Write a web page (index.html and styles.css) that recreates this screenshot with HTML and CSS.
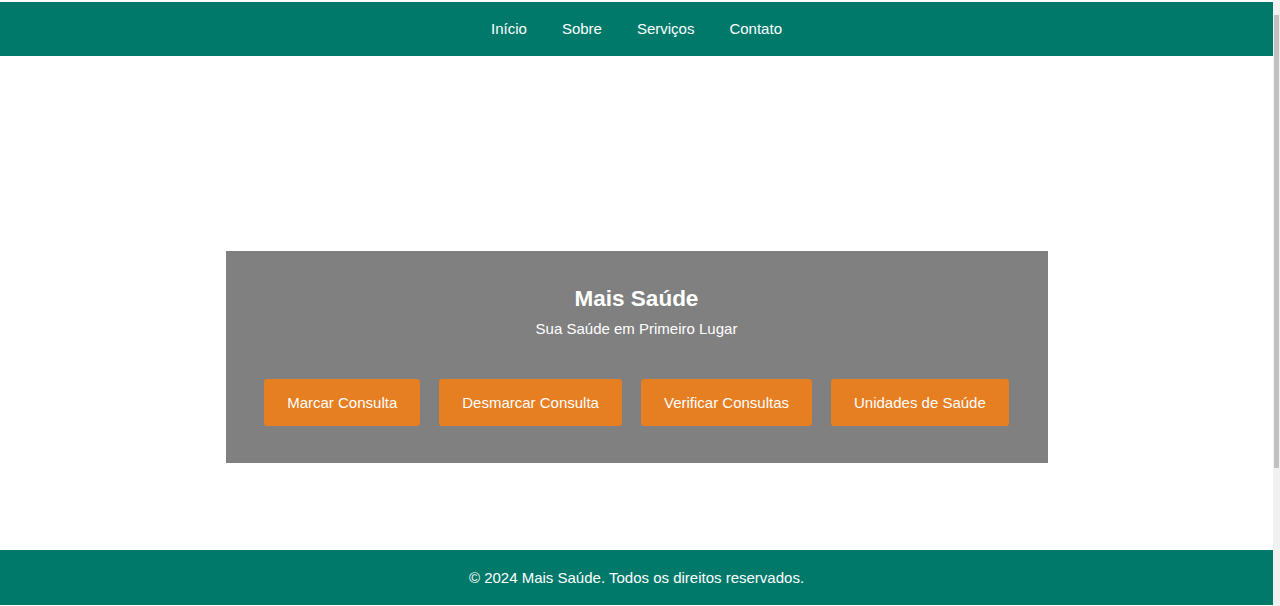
FILE: index.html
```html
<!DOCTYPE html>
<html lang="pt-BR">
<head>
<meta charset="utf-8">
<title>Mais Saúde</title>
<link rel="stylesheet" href="styles.css">
</head>
<body>
<header class="topbar">
  <nav class="nav">
    <a class="nav-link" href="#">Início</a>
    <a class="nav-link" href="#">Sobre</a>
    <a class="nav-link" href="#">Serviços</a>
    <a class="nav-link" href="#">Contato</a>
  </nav>
</header>
<main class="main">
  <section class="hero">
    <h1 class="hero-title">Mais Saúde</h1>
    <p class="hero-sub">Sua Saúde em Primeiro Lugar</p>
    <div class="actions">
      <button class="btn">Marcar Consulta</button>
      <button class="btn">Desmarcar Consulta</button>
      <button class="btn">Verificar Consultas</button>
      <button class="btn">Unidades de Saúde</button>
    </div>
  </section>
</main>
<footer class="footer">
  <p class="footer-text">© 2024 Mais Saúde. Todos os direitos reservados.</p>
</footer>
<div class="scrollbar" aria-hidden="true"><div class="scrollbar-thumb"></div></div>
</body>
</html>
```
FILE: styles.css
```css
html {
  overflow: hidden;
}
body {
  margin: 0;
  padding: 2px 7px 0 0;
  font-family: "Liberation Sans", Arial, sans-serif;
  font-size: 15px;
  color: #fff;
  background: #fff;
}
.scrollbar {
  position: fixed;
  top: 0;
  right: 0;
  width: 7px;
  height: 606px;
  background: #f1f1f1;
  display: flex;
  flex-direction: column;
  padding-top: 15px;
  box-sizing: border-box;
}
.scrollbar-thumb {
  height: 453px;
  margin: 0 1px;
  background: #c1c1c1;
}
.topbar {
  background: #00796b;
  height: 54px;
  display: flex;
  align-items: center;
  justify-content: center;
}
.nav {
  display: flex;
  gap: 35px;
}
.nav-link {
  color: #fff;
  text-decoration: none;
  font-size: 15px;
  line-height: 18px;
}
.main {
  padding: 195px 0 87px;
  display: flex;
  justify-content: center;
}
.hero {
  width: 822px;
  background: #808080;
  padding: 35px 0 37px;
  text-align: center;
}
.hero-title {
  margin: 0;
  font-size: 22.5px;
  line-height: 26px;
  font-weight: bold;
}
.hero-sub {
  margin: 8px 0 0;
  font-size: 15px;
  line-height: 18px;
}
.actions {
  margin-top: 41px;
  display: flex;
  justify-content: center;
  gap: 19px;
}
.btn {
  height: 47px;
  padding: 0 23px;
  border: none;
  border-radius: 3px;
  background: #e67e22;
  color: #fff;
  font-family: "Liberation Sans", Arial, sans-serif;
  font-size: 15px;
}
.footer {
  background: #00796b;
  height: 55px;
  display: flex;
  align-items: center;
  justify-content: center;
}
.footer-text {
  margin: 0;
  font-size: 15px;
}
```
